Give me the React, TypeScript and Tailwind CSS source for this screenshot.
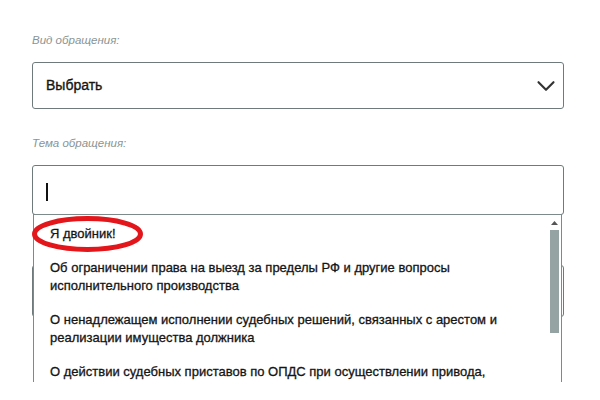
import { ChevronDown } from "lucide-react";

const topics = [
  "Я двойник!",
  "Об ограничении права на выезд за пределы РФ и другие вопросы исполнительного производства",
  "О ненадлежащем исполнении судебных решений, связанных с арестом и реализации имущества должника",
  "О действии судебных приставов по ОПДС при осуществлении привода,",
];

export default function App() {
  return (
    <div className="w-[600px] h-[400px] bg-white overflow-hidden font-['Liberation_Sans',Arial,sans-serif] text-[#151515]">
      <div className="ml-8 w-[532px] pt-[33px]">
        {/* вид обращения */}
        <div className="text-[11.5px] leading-[14px] italic text-[#8a9494]">Вид обращения:</div>
        <div className="mt-[15px] h-[47px] border border-[#6f7b7b] rounded-[3px] flex items-center justify-between pl-[13px] pr-[2px]">
          <span className="text-[14px] [-webkit-text-stroke:0.35px_#151515]">Выбрать</span>
          <ChevronDown className="w-[30px] h-[30px] text-[#333]" strokeWidth={1.7} />
        </div>

        {/* тема обращения */}
        <div className="mt-[27px] text-[11.5px] leading-[14px] italic text-[#8a9494]">Тема обращения:</div>
        <div className="relative mt-[15px]">
          <div className="h-[50px] border border-[#6f7b7b] rounded-[3px] flex items-center pl-[13px] pt-[3px]">
            <span className="w-[1.5px] h-[18px] bg-[#111]" />
          </div>

          {/* список */}
          <div className="absolute left-[1px] top-[49px] z-10 w-[529px] h-[168px] overflow-hidden bg-white border-x border-t border-[#7d8a8a] flex">
            <ul className="flex-1 pt-[2px]">
              {topics.map((t, i) => (
                <li
                  key={i}
                  className="pl-4 pr-6 py-2 text-[13px] leading-[18px] [-webkit-text-stroke:0.3px_#151515]"
                >
                  {t}
                </li>
              ))}
            </ul>
            <div className="w-[11px] mr-[1px] flex flex-col items-center pt-[6px]">
              <svg width="7" height="4" viewBox="0 0 7 4">
                <path d="M0 4 L3.5 0 L7 4 Z" fill="#555" />
              </svg>
              <div className="mt-[5px] w-[9px] h-[103px] bg-[#95a3a2]" />
            </div>
          </div>

          {/* обведено */}
          <svg
            className="absolute z-20 left-0 top-[51px] pointer-events-none"
            width="112"
            height="37"
            viewBox="0 0 112 37"
          >
            <ellipse cx="55.5" cy="18" rx="53" ry="15.5" fill="none" stroke="#e3161b" strokeWidth="5" />
          </svg>
        </div>

        {/* следующее поле под списком */}
        <div className="h-[52px] mt-[50px] border border-[#6f7b7b] rounded-[3px]" />
      </div>
    </div>
  );
}
